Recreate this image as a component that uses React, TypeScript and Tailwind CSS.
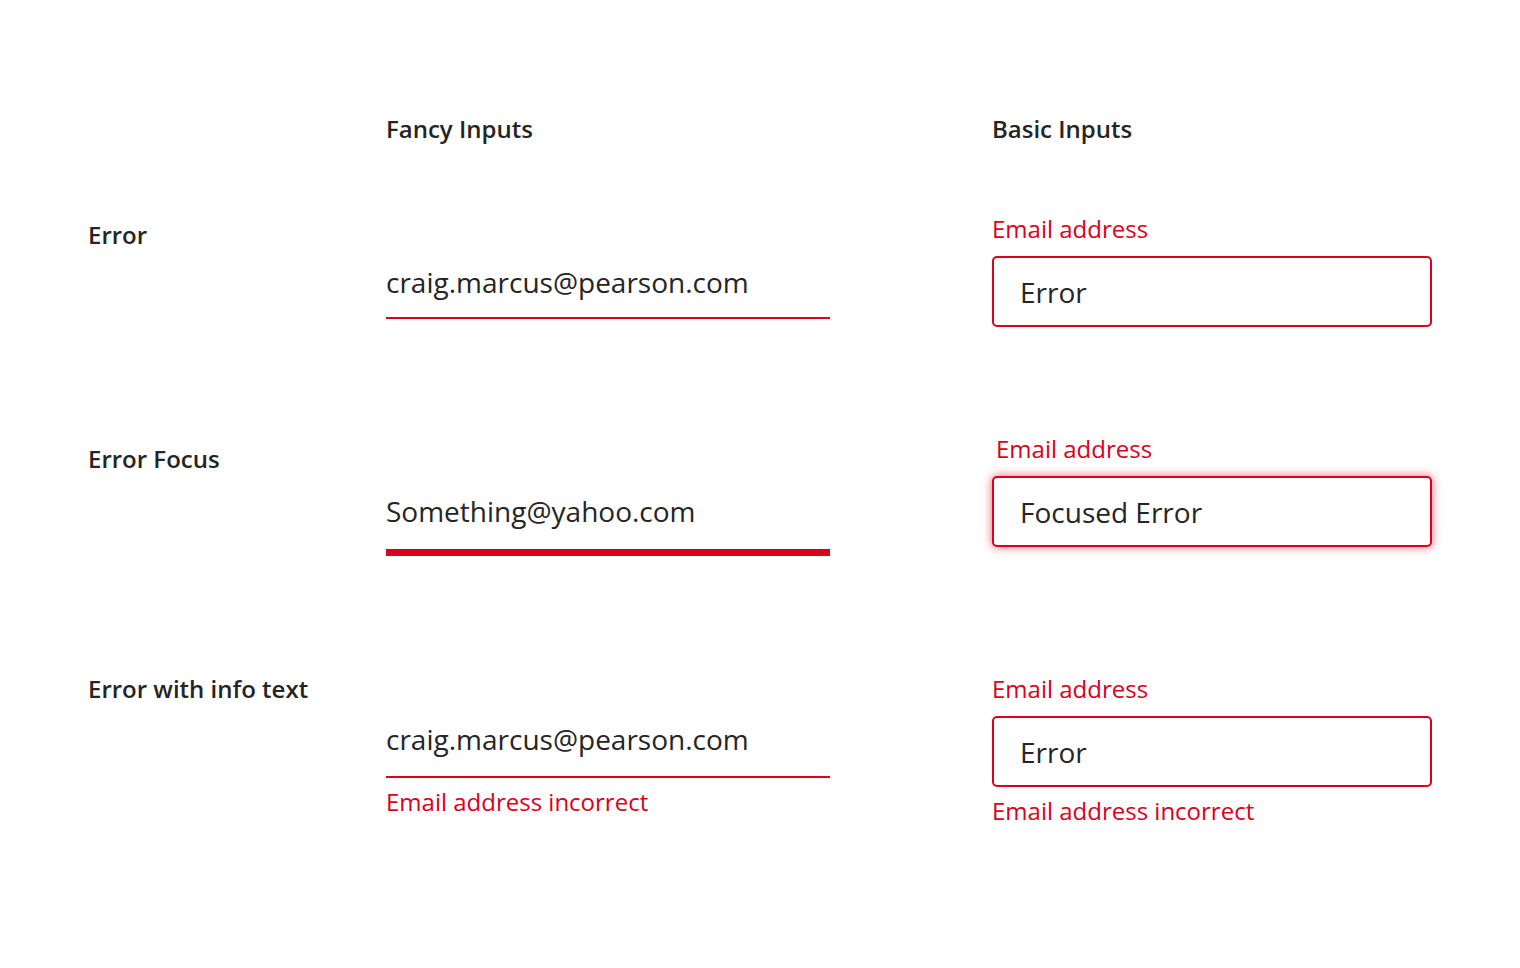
import type { ReactNode } from 'react'

const font = { fontFamily: '"Open Sans", "Noto Sans", sans-serif' }

function RowLabel({ children, className }: { children: ReactNode; className?: string }) {
  return <div className={'text-[24px] leading-[30px] font-semibold text-[#252525] ' + (className ?? '')}>{children}</div>
}

function FancyInput({ value, focused, info, className }: { value: string; focused?: boolean; info?: string; className?: string }) {
  return (
    <div className={className}>
      <div
        className={
          'text-[28px] leading-[40px] text-[#252525] border-[#db0020] ' +
          (focused ? 'border-b-[7px] pb-[18px]' : info ? 'border-b-2 pb-[17px]' : 'border-b-2 pb-[15px]')
        }
      >
        {value}
      </div>
      {info && <div className="mt-[9px] text-[24px] leading-[30px] text-[#db0020]">{info}</div>}
    </div>
  )
}

function BasicInput({ value, focused, info, className }: { value: string; focused?: boolean; info?: string; className?: string }) {
  return (
    <div className={className}>
      <div className={'text-[24px] leading-[30px] text-[#db0020] ' + (focused ? 'pl-1' : '')}>Email address</div>
      <div
        className={
          'mt-3 flex h-[71px] items-center rounded-[5px] border-2 border-[#db0020] bg-white px-[26px] text-[28px] text-[#252525] ' +
          (focused ? 'shadow-[0_0_8px_1px_rgba(219,0,32,0.5)]' : '')
        }
      >
        {value}
      </div>
      {info && <div className="mt-[9px] text-[24px] leading-[30px] text-[#db0020]">{info}</div>}
    </div>
  )
}

export default function App() {
  return (
    <div style={font} className="min-h-screen bg-white pl-[88px] pt-[114px]">
      <div className="grid h-[100px] grid-cols-[298px_606px_440px]">
        <div />
        <RowLabel>Fancy Inputs</RowLabel>
        <RowLabel>Basic Inputs</RowLabel>
      </div>

      <div className="grid h-[220px] grid-cols-[298px_444px_162px_440px]">
        <RowLabel className="mt-[6px]">Error</RowLabel>
        <FancyInput className="mt-[48px]" value="craig.marcus@pearson.com" />
        <div />
        <BasicInput value="Error" />
      </div>

      <div className="grid h-[240px] grid-cols-[298px_444px_162px_440px]">
        <RowLabel className="mt-[10px]">Error Focus</RowLabel>
        <FancyInput className="mt-[57px]" value="Something@yahoo.com" focused />
        <div />
        <BasicInput value="Focused Error" focused />
      </div>

      <div className="grid grid-cols-[298px_444px_162px_440px]">
        <RowLabel>Error with info text</RowLabel>
        <FancyInput className="mt-[45px]" value="craig.marcus@pearson.com" info="Email address incorrect" />
        <div />
        <BasicInput value="Error" info="Email address incorrect" />
      </div>
    </div>
  )
}
